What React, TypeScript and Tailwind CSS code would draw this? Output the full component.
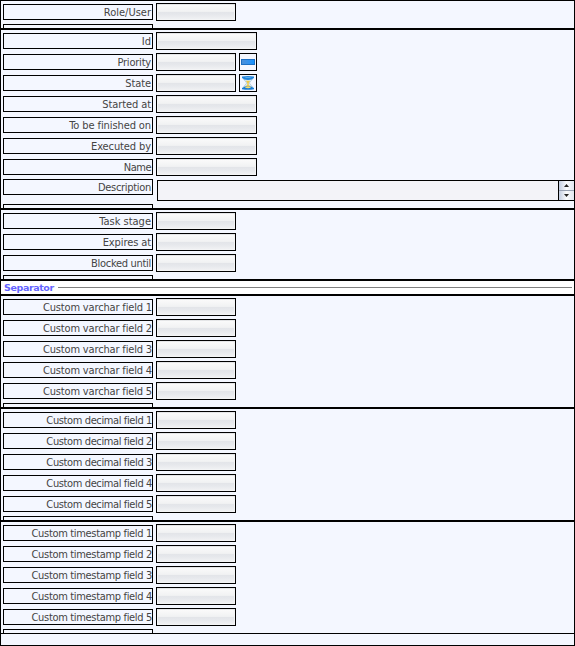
import React from "react";

const LABEL =
  "mt-px h-4 w-[150px] shrink-0 border border-black pt-px text-right text-[11px] leading-[14px] whitespace-nowrap text-[#444] font-['DejaVu_Sans_Condensed','DejaVu_Sans',sans-serif] [font-stretch:condensed]";

function Label({ text, spacing }: { text: string; spacing: string }) {
  return (
    <div className={LABEL}>
      <span className={spacing}>{text}</span>
    </div>
  );
}

function Input({ wide }: { wide?: boolean }) {
  return (
    <div
      className={`h-[18px] shrink-0 border border-black bg-[linear-gradient(to_bottom,#dfe0e2_0%,#f3f4f5_12%,#f3f4f5_100%)] p-px ${wide ? "w-[101px]" : "w-20"}`}
    >
      <div className="h-full rounded-[1px] bg-[linear-gradient(to_bottom,#fafafa_0%,#f1f2f3_46%,#e3e5e9_52%,#e6e8ec_70%,#f0f1f3_100%)]" />
    </div>
  );
}

function IconBox({ children }: { children: React.ReactNode }) {
  return (
    <div className="flex h-[18px] w-[18px] shrink-0 items-center justify-center border border-black bg-[#f4f7ff]">
      {children}
    </div>
  );
}

function Hourglass() {
  return (
    <svg width="14" height="14" viewBox="0 0 14 14">
      <path d="M2.500 3h9L8.300 7l3.200 4h-9l3.200-4z" fill="#dcecf6" stroke="#8fb3c9" strokeWidth=".5" />
      <path d="M4.800 4.800h4.400L7.700 7v1.800L10 11H4l2.300-2.200V7z" fill="#efc94a" />
      <path d="M1 .6Q7-.4 13 .6v1.300Q11 4 7 4T1 1.900z" fill="#1f84dc" />
      <path d="M3.500 1.200h7Q7 2.200 3.500 1.200z" fill="#8fd2fa" />
      <path d="M1 12Q3 10.200 7 10.200t6 1.800v1.300Q7 14.400 1 13.300z" fill="#1a7cd4" />
      <path d="M3.800 11.800Q7 8.800 10.200 11.800 7 12.600 3.800 11.800z" fill="#f4dc70" />
    </svg>
  );
}

function PriorityBar() {
  return (
    <div className="h-1.5 w-3.5 border border-[#1c6fc4] bg-linear-to-r from-[#4a90d9] to-[#0f93ff]" />
  );
}

type RowData = { text: string; wide?: boolean; icon?: React.ReactNode; spacing?: string };

function Row({ text, wide, icon, spacing = "mr-px tracking-[-0.1px]" }: RowData) {
  return (
    <div className="flex h-[18px] gap-[3px]">
      <Label text={text} spacing={spacing} />
      <Input wide={wide} />
      {icon && <IconBox>{icon}</IconBox>}
    </div>
  );
}

function Stub() {
  return <div className="h-1 w-[150px] border border-b-0 border-black" />;
}

function Section({ rows, last, children }: { rows: RowData[]; last?: boolean; children?: React.ReactNode }) {
  return (
    <section className={`flex flex-col gap-[3px] border-black pt-0.5 pl-0.5 ${last ? "border-b" : "border-b-2"}`}>
      {rows.map((row) => (
        <Row key={row.text} {...row} />
      ))}
      {children}
      <Stub />
    </section>
  );
}

const ARROW_BUTTON =
  "flex h-[9px] items-center justify-center bg-linear-to-r from-[#c3cde0] via-[#fafbfd] to-[#e2e7f0]";

function Description() {
  return (
    <div className="-mt-px flex h-[23px] gap-1 pt-px">
      <div className="-mt-px">
        <Label text="Description" spacing="mr-px tracking-[-0.3px]" />
      </div>
      <div className="mt-px flex h-[21px] grow border-y border-l border-black bg-[#f3f3f8]">
        <div className="grow" />
        <div className="flex w-4 flex-col border-l border-black">
          <div className={ARROW_BUTTON}>
            <svg width="5" height="3" viewBox="0 0 5 3"><path d="M2.500 0 5 3H0z" fill="#222" /></svg>
          </div>
          <div className="h-px bg-[#98a1b2]" />
          <div className={ARROW_BUTTON}>
            <svg width="5" height="3" viewBox="0 0 5 3"><path d="M0 0h5L2.500 3z" fill="#222" /></svg>
          </div>
        </div>
      </div>
    </div>
  );
}

const fields = (kind: string, spacing: string): RowData[] =>
  [1, 2, 3, 4, 5].map((n) => ({ text: `Custom ${kind} field ${n}`, spacing }));

export default function App() {
  return (
    <main className="h-[646px] w-[575px] overflow-hidden border border-black bg-[#f4f7ff]">
      <Section rows={[{ text: "Role/User", spacing: "mr-px" }]} />
      <Section
        rows={[
          { text: "Id", wide: true, spacing: "mr-px" },
          { text: "Priority", icon: <PriorityBar />, spacing: "mr-px tracking-[-0.2px]" },
          { text: "State", icon: <Hourglass /> },
          { text: "Started at", wide: true },
          { text: "To be finished on", wide: true },
          { text: "Executed by", wide: true },
          { text: "Name", wide: true, spacing: "mr-px tracking-[-0.5px]" },
        ]}
      >
        <Description />
      </Section>
      <Section
        rows={[
          { text: "Task stage", spacing: "mr-px" },
          { text: "Expires at" },
          { text: "Blocked until", spacing: "mr-px tracking-[-0.3px]" },
        ]}
      />
      <div className="flex h-[15px] items-start border-b-2 border-black bg-white pr-0.5 pl-[3px]">
        <span className="w-[54px] text-[9.5px] leading-[13px] font-bold text-[#6464ff] font-['DejaVu_Sans',sans-serif] tracking-[-0.4px]">
          Separator
        </span>
        <div className="mt-1.5 h-px grow bg-[#808080]" />
      </div>
      <Section rows={fields("varchar", "tracking-[-0.16px]")} />
      <Section rows={fields("decimal", "tracking-[-0.38px]")} />
      <Section rows={fields("timestamp", "tracking-[-0.33px]")} last />
    </main>
  );
}
